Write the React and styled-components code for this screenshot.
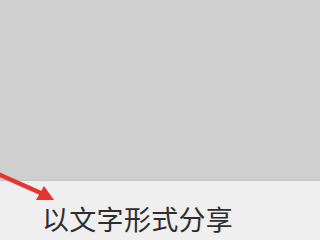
import React from 'react'
import styled, { createGlobalStyle } from 'styled-components';

const GlobalStyle = createGlobalStyle`
    html, body {
        margin: 0;
        padding: 0;
        background: #efefef;
    }
`;

const Screen = styled.div`
    position: relative;
    width: 320px;
    height: 240px;
    display: flex;
    flex-direction: column;
    overflow: hidden;
    font-family: "Noto Sans CJK SC", "Noto Sans", sans-serif;
`;

const Overlay = styled.div`
    height: 180px;
    background: #cfcfcf;
    border-bottom: 1px solid #c4c4c4;
    flex-shrink: 0;
`;

const Sheet = styled.div`
    flex: 1;
    background: #efefef;
    display: flex;
    align-items: flex-start;
    padding: 22px 0 0 42px;
`;

const OptionText = styled.span`
    font-size: 27px;
    line-height: 1.2;
    color: #2e2e2e;
    letter-spacing: 0.3px;
`;

const Arrow = styled.svg`
    position: absolute;
    left: 0;
    top: 160px;
    width: 70px;
    height: 50px;
`;

export default function App() {
    return (
        <>
        <GlobalStyle />
        <Screen>
            <Overlay />
            <Sheet>
                <OptionText>以文字形式分享</OptionText>
            </Sheet>
            {/* red annotation arrow */}
            <Arrow viewBox="0 0 70 50">
                <line x1="-2" y1="14" x2="43" y2="34" stroke="#e6342e" strokeWidth="4.5" strokeLinecap="round" />
                <polygon points="54,40 36,40 44,26" fill="#e6342e" />
            </Arrow>
        </Screen>
        </>
    )
}
